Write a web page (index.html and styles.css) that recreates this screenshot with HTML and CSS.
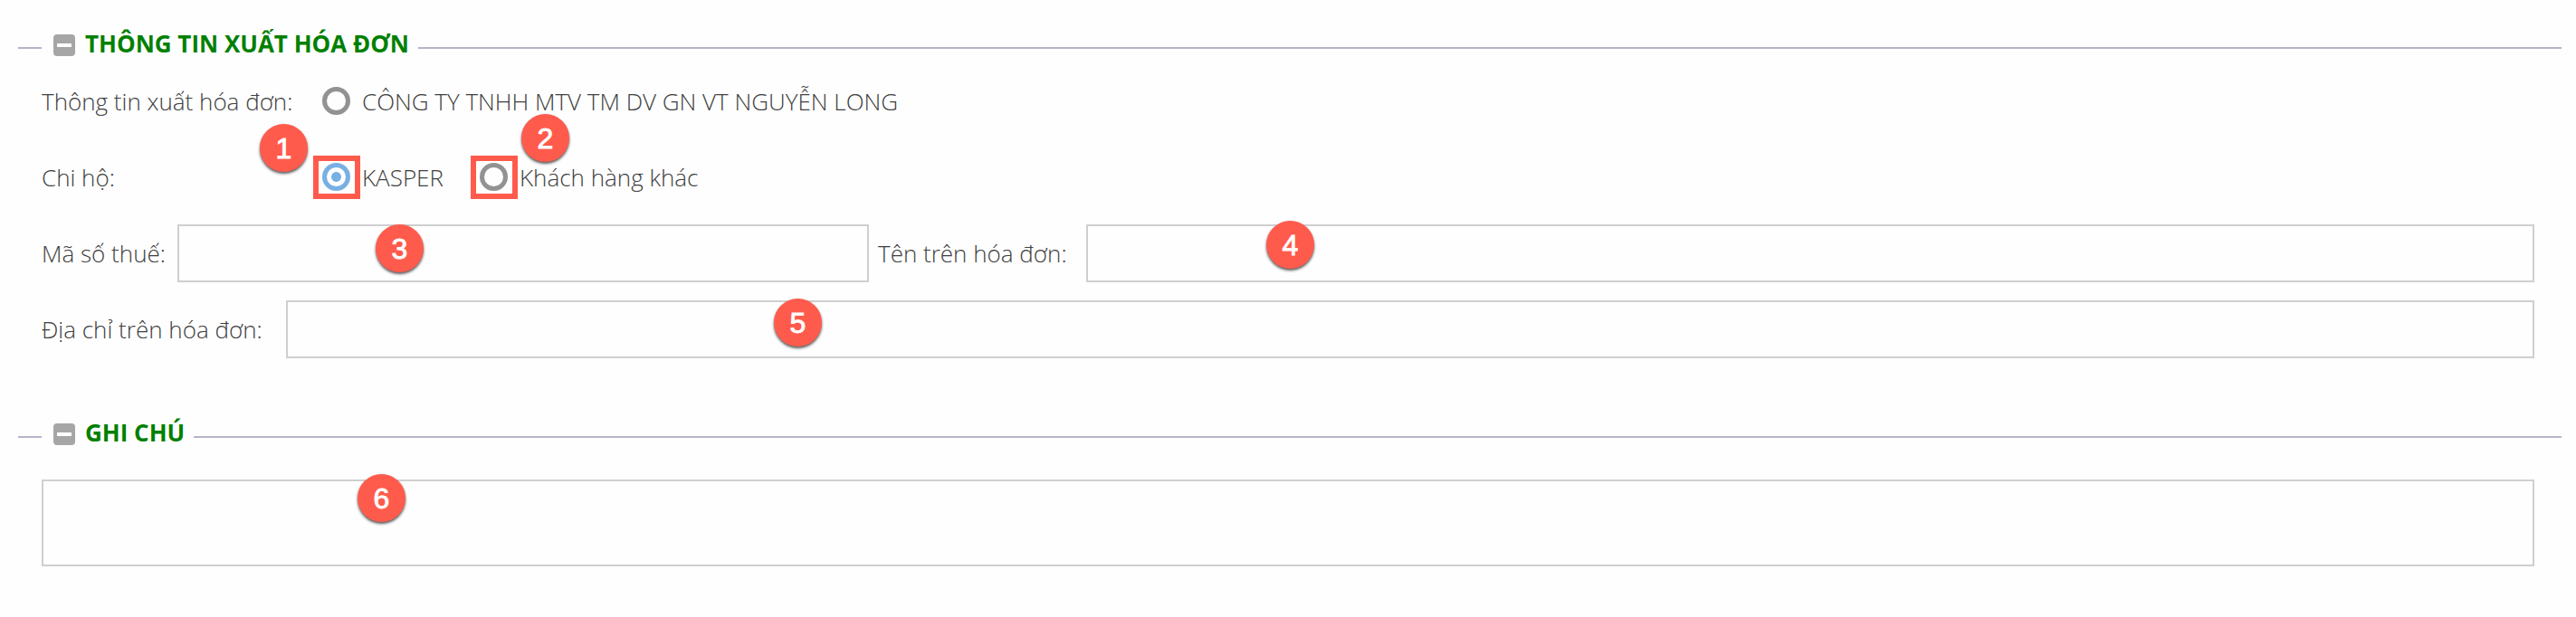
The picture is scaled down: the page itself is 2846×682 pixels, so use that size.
FILE: index.html
```html
<!DOCTYPE html>
<html lang="vi">
<head>
<meta charset="utf-8">
<title>Thông tin xuất hóa đơn</title>
<link rel="stylesheet" href="styles.css">
</head>
<body>
<main class="form">
  <section class="group">
    <header class="group-head">
      <span class="rule rule-start"></span>
      <svg class="toggle" viewBox="0 0 24 24"><rect width="24" height="24" rx="4" fill="#a6a6a6"/><rect x="4" y="10" width="16" height="4" rx=".5" fill="#fff"/></svg>
      <h2 class="title title-invoice">THÔNG TIN XUẤT HÓA ĐƠN</h2>
      <span class="rule rule-end"></span>
    </header>
    <div class="rows">
      <div class="row">
        <span class="label label-choice">Thông tin xuất hóa đơn:</span>
        <span class="radio"></span><span class="option">CÔNG TY TNHH MTV TM DV GN VT NGUYỄN LONG</span>
      </div>
      <div class="row">
        <span class="label label-choice">Chi hộ:</span>
        <span class="radio radio-on"><i class="frame"></i></span><span class="option option-kasper">KASPER</span>
        <span class="radio"><i class="frame"></i></span><span class="option">Khách hàng khác</span>
      </div>
      <div class="row">
        <span class="label label-tax">Mã số thuế:</span>
        <span class="field field-tax"></span>
        <span class="label label-name">Tên trên hóa đơn:</span>
        <span class="field"></span>
      </div>
      <div class="row">
        <span class="label label-address">Địa chỉ trên hóa đơn:</span>
        <span class="field"></span>
      </div>
    </div>
  </section>
  <section class="group">
    <header class="group-head">
      <span class="rule rule-start"></span>
      <svg class="toggle" viewBox="0 0 24 24"><rect width="24" height="24" rx="4" fill="#a6a6a6"/><rect x="4" y="10" width="16" height="4" rx=".5" fill="#fff"/></svg>
      <h2 class="title title-note">GHI CHÚ</h2>
      <span class="rule rule-end"></span>
    </header>
    <div class="rows rows-note"><div class="note"></div></div>
  </section>
  <span class="badge b1">1</span>
  <span class="badge b2">2</span>
  <span class="badge b3">3</span>
  <span class="badge b4">4</span>
  <span class="badge b5">5</span>
  <span class="badge b6">6</span>
</main>
</body>
</html>
```
FILE: styles.css
```css
* { box-sizing: border-box; }
body { margin: 0; background: #fefefe; }
.form {
  position: relative;
  display: flex;
  flex-direction: column;
  gap: 54px;
  height: 682px;
  padding: 20px 16px 0 20px;
  font: 300 26px/36px "Open Sans", "Noto Sans", sans-serif;
  color: #404040;
}
.group-head { display: flex; align-items: center; height: 56px; }
.rule { height: 2px; margin-top: 10px; background: #b5b5c8; }
.rule-start { width: 26px; }
.rule-end { flex: 1; }
.toggle { width: 24px; height: 24px; margin: 4px 11px 0 13px; }
.title { margin: 0; font-size: 26px; font-weight: 700; line-height: 36px; color: #008000; white-space: nowrap; }
.title-invoice { width: 368px; }
.title-note { width: 120px; }
.rows { display: flex; flex-direction: column; gap: 20px; padding: 4px 30px 0 26px; }
.rows-note { padding-top: 24px; }
.row { display: flex; align-items: center; height: 64px; white-space: nowrap; }
.label-choice { width: 310px; }
.label-tax { width: 150px; }
.label-name { width: 240px; padding-left: 10px; }
.label-address { width: 270px; }
.field { flex: 1; height: 64px; border: 2px solid #cfcfcf; }
.field-tax { flex: 0 0 764px; }
.note { height: 96px; border: 2px solid #cfcfcf; }
.radio {
  position: relative;
  flex: none;
  width: 31px;
  height: 31px;
  margin-top: -2px;
  margin-right: 13px;
  border: 5px solid #929292;
  border-radius: 50%;
}
.radio-on { border-color: #78b0e4; background: radial-gradient(circle, #78b0e4 5px, transparent 5.8px); }
.frame { position: absolute; left: -15px; top: -13px; width: 52px; height: 48px; border: 6px solid #ff5b4d; }
.option-kasper { width: 130px; }
.badge {
  position: absolute;
  width: 53px;
  height: 53px;
  border-radius: 50%;
  background: #ff5b4d;
  box-shadow: 0 2px 3px rgba(0, 0, 0, .65);
  color: #fff;
  font: 400 32px/55px "Liberation Sans", Arial, sans-serif;
  -webkit-text-stroke: .9px #fff;
  text-align: center;
}
.b1 { left: 287px; top: 137px; }
.b2 { left: 576px; top: 126px; }
.b3 { left: 415px; top: 248px; }
.b4 { left: 1399px; top: 244px; }
.b5 { left: 855px; top: 330px; }
.b6 { left: 395px; top: 524px; }
```
